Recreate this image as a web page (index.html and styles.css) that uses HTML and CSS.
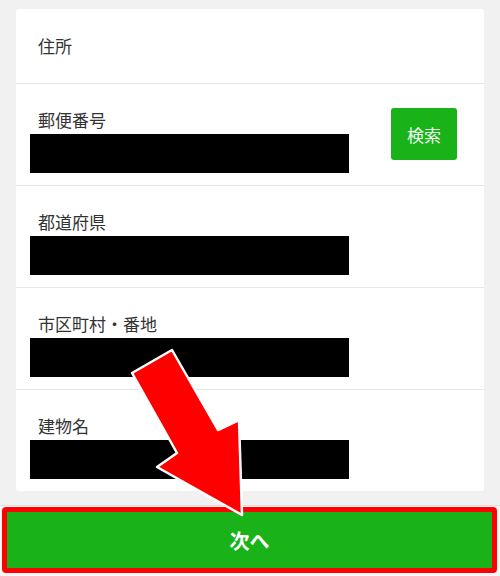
FILE: index.html
```html
<!DOCTYPE html>
<html lang="ja">
<head>
    <meta charset="UTF-8">
    <meta name="viewport" content="width=device-width, initial-scale=1.0">
    <title>住所</title>
    <link rel="stylesheet" href="styles.css">
</head>
<body>
    <div class="card">
        <div class="row row-title">
            <span class="label">住所</span>
        </div>

        <div class="row">
            <div class="field">
                <span class="label">郵便番号</span>
                <div class="masked"></div>
            </div>
            <button class="btn-search">検索</button>
        </div>

        <div class="row">
            <div class="field">
                <span class="label">都道府県</span>
                <div class="masked"></div>
            </div>
        </div>

        <div class="row">
            <div class="field">
                <span class="label">市区町村・番地</span>
                <div class="masked"></div>
            </div>
        </div>

        <div class="row">
            <div class="field">
                <span class="label">建物名</span>
                <div class="masked"></div>
            </div>
        </div>
    </div>

    <div class="footer">
        <div class="highlight">
            <button class="btn-next">次へ</button>
        </div>
    </div>

    <!-- 注釈の矢印 -->
    <svg class="arrow" width="500" height="576" viewBox="0 0 500 576">
        <polygon points="132,373 172,350 218,430 239,420 242,515 157,467 177,453"
                 fill="#ff0000" stroke="#ffffff" stroke-width="2.5" stroke-linejoin="round"/>
    </svg>
</body>
</html>
```

FILE: styles.css
```css
body {
    font-family: "Noto Sans CJK JP", "Noto Sans", sans-serif;
    margin: 0;
    padding: 0;
    background-color: #f1f1f1;
    width: 500px;
    height: 576px;
    overflow: hidden;
    position: relative;
}

.card {
    margin: 9px 16px 0;
    background-color: #ffffff;
    border-radius: 3px;
}

.row {
    display: flex;
    align-items: flex-start;
    height: 102px;
    box-sizing: border-box;
    padding: 24px 27px 0 14px;
    border-top: 1px solid #e6e6e6;
}

.row-title {
    height: 74px;
    align-items: center;
    padding-top: 0;
    border-top: none;
}

.field {
    display: flex;
    flex-direction: column;
    gap: 2px;
}

.label {
    display: block;
    padding-left: 8px;
    font-size: 17px;
    line-height: 24px;
    color: #333333;
}

.masked {
    width: 319px;
    height: 39px;
    background-color: #000000;
}

.btn-search {
    margin-left: auto;
    width: 66px;
    height: 52px;
    border: none;
    border-radius: 3px;
    background-color: #19b319;
    color: #f2fbf2;
    font-family: inherit;
    font-size: 17px;
    padding: 0;
}

.footer {
    margin-top: 14px;
    border-top: 1px solid #dddddd;
    background-color: #f7f7f7;
    padding: 1px 3px 3px 2px;
}

.highlight {
    border: 5px solid #ff0000;
    border-radius: 4px;
}

.btn-next {
    display: block;
    width: 100%;
    height: 56px;
    border: none;
    background-color: #19b319;
    color: #ffffff;
    font-family: inherit;
    font-size: 20px;
    font-weight: bold;
    padding: 0;
}

.arrow {
    position: absolute;
    top: 0;
    left: 0;
    pointer-events: none;
}
```
